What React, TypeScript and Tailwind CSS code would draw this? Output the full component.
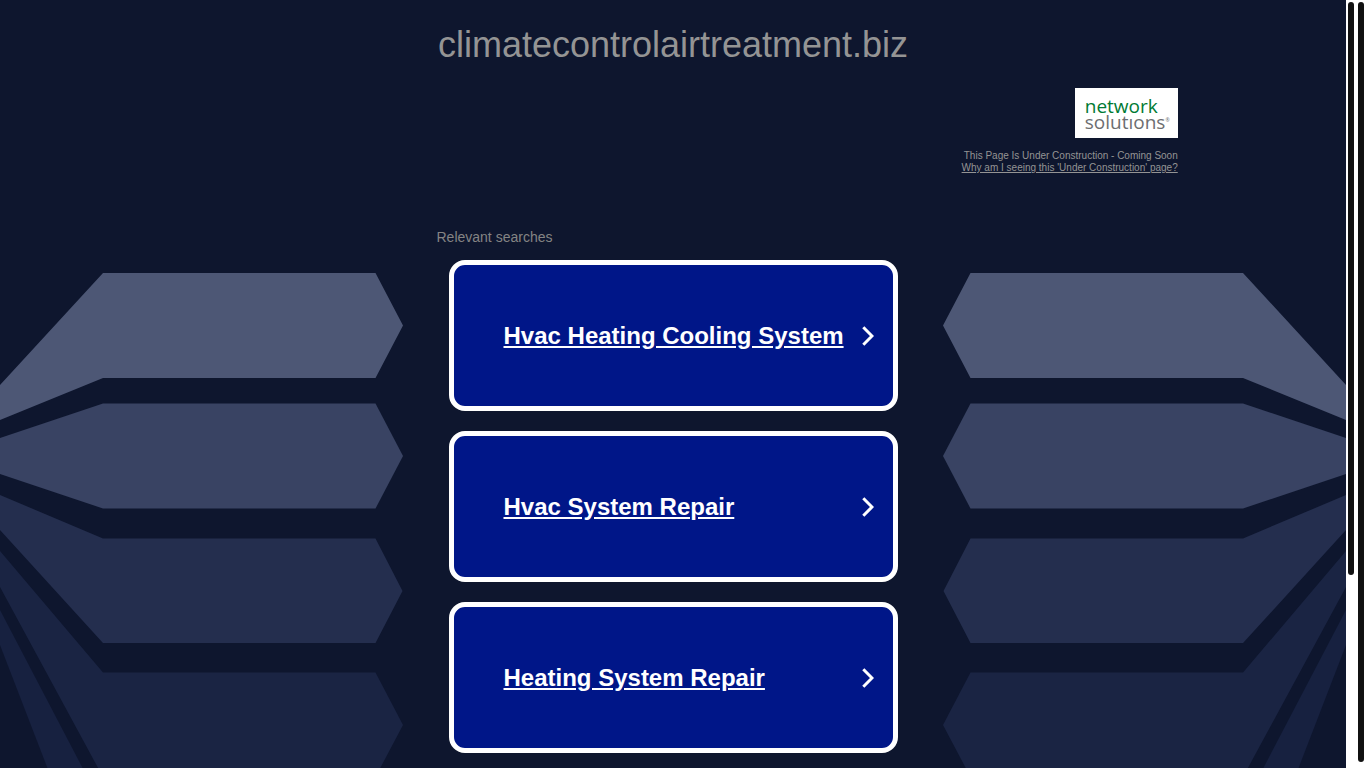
const searches = ['Hvac Heating Cooling System', 'Hvac System Repair', 'Heating System Repair'];

const shapes = [
  { fill: '#4d5775', points: '0,385 103,273 375.5,273 403,325.5 375.5,378 103,378 0,420' },
  { fill: '#394363', points: '0,438 103,403.5 375.5,403.5 403,456 375.5,508.5 103,508.5 0,474' },
  { fill: '#242e4e', points: '0,495 103,538.5 375.5,538.5 402.5,591 375.5,643 103,643 0,530' },
  { fill: '#1a2443', points: '0,551 103,672.5 375.5,672.5 403,725 375.5,777 103,777 0,587' },
  { fill: '#172140', points: '0,610 103,807 103,912 0,645' },
];

function Wing() {
  return (
    <>
      {shapes.map((shape) => (
        <polygon key={shape.fill} fill={shape.fill} points={shape.points} />
      ))}
    </>
  );
}

function Backdrop() {
  return (
    <svg
      className="col-start-1 row-start-1 w-full h-full min-h-0"
      viewBox="0 0 1346 768"
      preserveAspectRatio="xMidYMin slice"
      aria-hidden="true"
    >
      <Wing />
      <g transform="translate(1346 0) scale(-1 1)">
        <Wing />
      </g>
    </svg>
  );
}

function Logo() {
  return (
    <a
      href="#"
      aria-label="Network Solutions"
      className="flex flex-col justify-center w-[103px] h-[50px] pt-[2px] pl-[10px] bg-white font-['Open_Sans',sans-serif] text-[19px] leading-4 font-medium"
    >
      <span className="text-[#007a33]">network</span>
      <span className="flex text-[#6d6e71]">
        solutıons<sup className="text-[5px] leading-4">®</sup>
      </span>
    </a>
  );
}

function Chevron() {
  return (
    <svg className="w-3 h-5 shrink-0" viewBox="0 0 12 20" fill="none" aria-hidden="true">
      <path d="M1.3 1.3 10 10 1.3 18.7" stroke="currentColor" strokeWidth="3" />
    </svg>
  );
}

function SearchCard({ label }: { label: string }) {
  return (
    <li>
      <a
        href="#"
        className="flex items-center justify-between h-[151px] pl-[50px] pr-[19px] border-5 border-white rounded-2xl bg-[#001688] text-white"
      >
        <span className="text-2xl font-bold underline whitespace-nowrap">{label}</span>
        <Chevron />
      </a>
    </li>
  );
}

export default function App() {
  return (
    <div className="flex h-screen overflow-hidden bg-white font-['Liberation_Sans',Arial,sans-serif]">
      <main className="grid flex-1 min-w-0 overflow-hidden bg-[#0e162e]">
        <Backdrop />

        <div className="col-start-1 row-start-1 flex flex-col items-center pt-6">
          <h1 className="text-4xl leading-[42px] text-[#949494]">climatecontrolairtreatment.biz</h1>

          <header className="flex flex-col items-end w-3/4 pt-[22px]">
            <Logo />
            <p className="pt-3 text-[10px] leading-3 text-right text-[#949494]">
              This Page Is Under Construction - Coming Soon
              <br />
              <a href="#" className="underline">
                Why am I seeing this 'Under Construction' page?
              </a>
            </p>
          </header>

          <section className="w-full max-w-[473px] pt-[54px]">
            <h2 className="text-sm leading-[18px] text-[#848484]">Relevant searches</h2>
            <ul className="flex flex-col gap-5 px-3 pt-[14px]">
              {searches.map((label) => (
                <SearchCard key={label} label={label} />
              ))}
            </ul>
          </section>
        </div>
      </main>

      {/* Scroll tracks */}
      <div className="w-[10px] p-[2px]">
        <div className="h-3/4 rounded-full bg-[#111111]" />
      </div>
      <div className="w-[10px] px-[2px] pt-[2px] pb-[6px]">
        <div className="h-full rounded-full bg-[#111111]" />
      </div>
    </div>
  );
}
